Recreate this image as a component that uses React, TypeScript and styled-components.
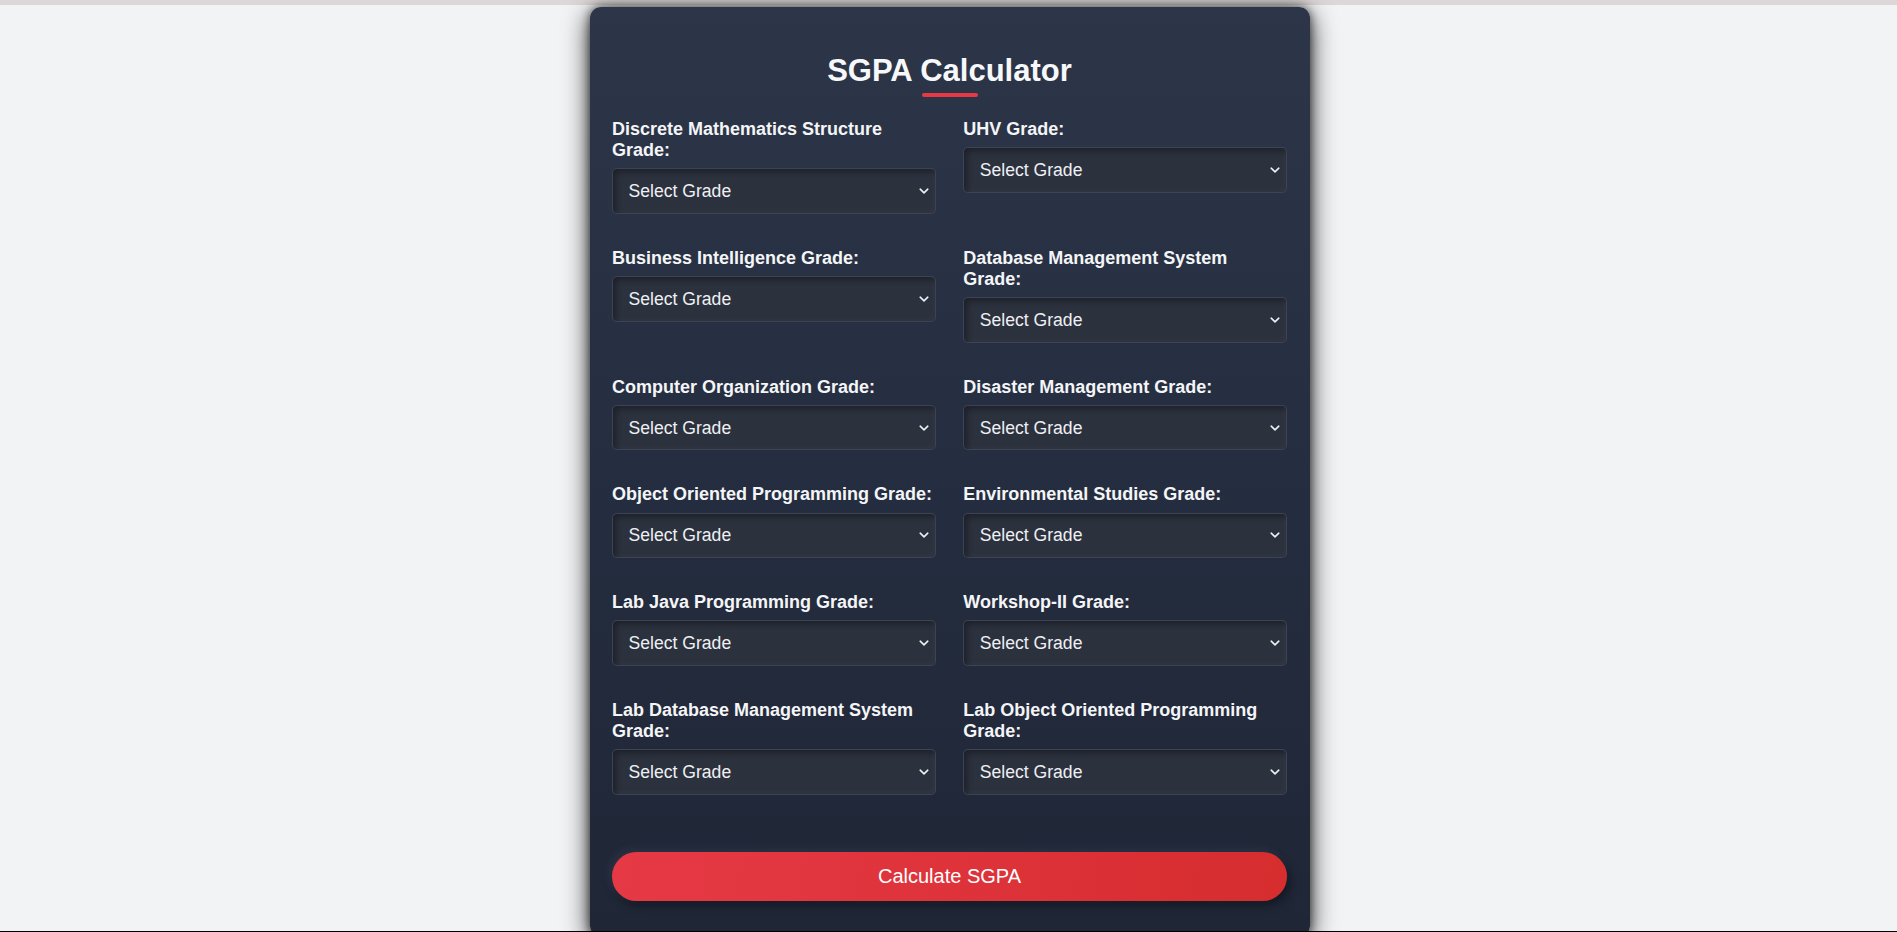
import React from "react";
import styled, { createGlobalStyle } from "styled-components";

const GlobalStyle = createGlobalStyle`
  html, body {
    margin: 0;
    padding: 0;
    height: 100%;
    overflow: hidden;
  }
  body {
    background: #f2f3f5;
    font-family: "Liberation Sans", Arial, sans-serif;
  }
  * { box-sizing: border-box; }
`;

const TopStrip = styled.div`
  height: 5px;
  background: #ddd7d7;
`;

const BottomEdge = styled.div`
  position: fixed;
  left: 0;
  right: 0;
  bottom: 0;
  height: 1px;
  background: #000;
`;

const Page = styled.main`
  display: flex;
  justify-content: center;
  padding-top: 2px;
`;

const Card = styled.section`
  width: 720px;
  margin-left: 2px;
  padding: 46px 22.5px 36px;
  border-radius: 11px;
  background: linear-gradient(180deg, #2c3648 0%, #242d3f 55%, #1f2636 100%);
  box-shadow: 0 6px 26px rgba(0, 0, 0, 0.85), 0 0 10px rgba(0, 0, 0, 0.55);
  display: flex;
  flex-direction: column;
`;

const Title = styled.h1`
  margin: 0;
  text-align: center;
  color: #f7f8fa;
  font-size: 31px;
  font-weight: 700;
  line-height: 35px;
`;

const Underline = styled.div`
  align-self: center;
  width: 56px;
  height: 4px;
  margin-top: 5px;
  border-radius: 2px;
  background: #e63946;
`;

const Grid = styled.div`
  display: grid;
  grid-template-columns: 1fr 1fr;
  column-gap: 27.5px;
  row-gap: 34px;
  align-items: start;
  margin-top: 22px;
`;

const Group = styled.div`
  display: flex;
  flex-direction: column;
`;

const Label = styled.label`
  color: #f4f5f7;
  font-size: 18px;
  font-weight: 700;
  line-height: 21px;
  margin-bottom: 7.3px;
`;

const SelectWrap = styled.div`
  position: relative;
`;

const Select = styled.select`
  appearance: none;
  -webkit-appearance: none;
  display: block;
  width: 100%;
  height: 45.5px;
  padding: 0 28px 0 15.5px;
  font-family: "Liberation Sans", Arial, sans-serif;
  font-size: 17.6px;
  color: #eef0f3;
  background-color: #2c313e;
  border: 1px solid rgba(120, 135, 160, 0.22);
  border-radius: 5px;
  box-shadow: inset 3px 3px 6px rgba(0, 0, 0, 0.35),
    inset -2px -2px 5px rgba(255, 255, 255, 0.04);
  outline: none;
  color-scheme: dark;
  cursor: pointer;
`;

const Chevron = styled.svg`
  position: absolute;
  right: 7px;
  top: 50%;
  width: 10px;
  height: 6px;
  margin-top: -3px;
  pointer-events: none;
`;

const Button = styled.button`
  margin-top: 57px;
  width: 100%;
  height: 49px;
  border: none;
  border-radius: 25px;
  background: linear-gradient(100deg, #e63946 0%, #d62d2f 100%);
  color: #ffffff;
  font-family: "Liberation Sans", Arial, sans-serif;
  font-size: 20px;
  font-weight: 400;
  cursor: pointer;
  box-shadow: -3px -3px 8px rgba(120, 140, 170, 0.12),
    4px 5px 10px rgba(0, 0, 0, 0.35);
`;

const subjects: string[] = [
  "Discrete Mathematics Structure",
  "UHV",
  "Business Intelligence",
  "Database Management System",
  "Computer Organization",
  "Disaster Management",
  "Object Oriented Programming",
  "Environmental Studies",
  "Lab Java Programming",
  "Workshop-II",
  "Lab Database Management System",
  "Lab Object Oriented Programming",
];

const grades = ["O", "A+", "A", "B+", "B", "C", "P", "F"];

export default function App() {
  return (
    <>
      <GlobalStyle />
      <TopStrip />
      <Page>
        <Card>
          <Title>SGPA Calculator</Title>
          <Underline />
          <Grid>
            {subjects.map((s, i) => (
              <Group key={s}>
                <Label htmlFor={`sub-${i}`}>{s} Grade:</Label>
                <SelectWrap>
                  <Select id={`sub-${i}`} defaultValue="">
                    <option value="">Select Grade</option>
                    {grades.map((g) => (
                      <option key={g} value={g}>
                        {g}
                      </option>
                    ))}
                  </Select>
                  <Chevron viewBox="0 0 10 6" aria-hidden="true">
                    <path
                      d="M1.2 1.2 L5 4.8 L8.8 1.2"
                      fill="none"
                      stroke="#eef0f3"
                      strokeWidth="1.6"
                      strokeLinecap="round"
                      strokeLinejoin="round"
                    />
                  </Chevron>
                </SelectWrap>
              </Group>
            ))}
          </Grid>
          <Button type="button">Calculate SGPA</Button>
        </Card>
      </Page>
      <BottomEdge />
    </>
  );
}
